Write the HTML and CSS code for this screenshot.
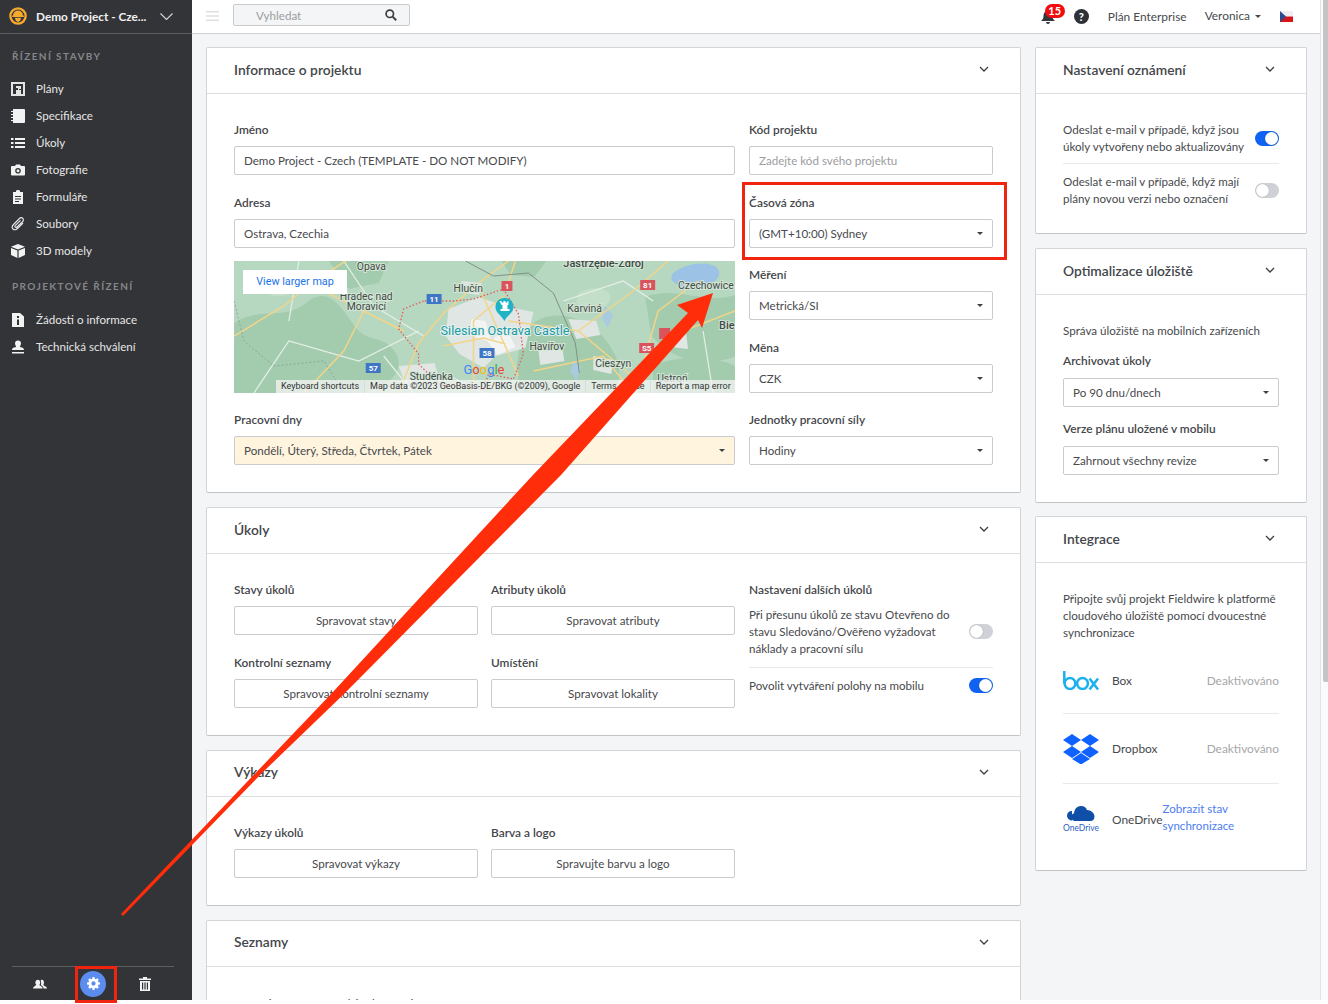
FILE: index.html
```html
<!DOCTYPE html>
<html lang="cs">
<head>
    <meta charset="UTF-8">
    <meta name="viewport" content="width=device-width, initial-scale=1.0">
    <title>Nastavení projektu</title>
    <link rel="stylesheet" href="styles.css">
</head>
<body>
<div class="app">
    <aside class="sidebar">
        <div class="project">
            <svg class="project-logo" viewBox="0 0 20 20"><circle cx="10" cy="10" r="8.500" fill="none" stroke="#f5a92e" stroke-width="2.600"/><path d="M4.500 9.500a5.500 5.500 0 0 1 11 0h1v1.500h-13V9.500z" fill="#f5a92e"/><path d="M6.500 12h7l-1 3-2.500 2-2.500-2z" fill="#f5a92e"/></svg>
            <span class="project-name">Demo Project - Cze...</span>
            <svg class="project-caret" viewBox="0 0 13 7"><path d="M.5.500l6 6 6-6" fill="none" stroke="#d8d9da" stroke-width="1.100"/></svg>
        </div>
        <div class="nav-title first">ŘÍZENÍ STAVBY</div>
        <a class="nav-item"><svg viewBox="0 0 14 14"><path d="M0 0h14v14H0zM2 2v10h3V8h2V6H5V4h5v3H8v1h2v4h2V2z" fill="#e4e4e4" fill-rule="evenodd"/></svg>Plány</a>
        <a class="nav-item"><svg viewBox="0 0 14 14"><path d="M2 0h11a1 1 0 0 1 1 1v12a1 1 0 0 1-1 1H2z" fill="#f2f2f2"/><path d="M0 2.500h3M0 5.500h3M0 8.500h3M0 11.500h3" stroke="#f2f2f2"/></svg>Specifikace</a>
        <a class="nav-item"><svg viewBox="0 0 14 14"><path d="M0 2h2.500v2H0zM0 6h2.500v2H0zM0 10h2.500v2H0zM4 2h10v2H4zM4 6h10v2H4zM4 10h10v2H4z" fill="#f2f2f2"/></svg>Úkoly</a>
        <a class="nav-item"><svg viewBox="0 0 14 14"><path d="M1 3h3l1-1.500h4L10 3h3a1 1 0 0 1 1 1v7.500a1 1 0 0 1-1 1H1a1 1 0 0 1-1-1V4a1 1 0 0 1 1-1zm6 2a2.800 2.800 0 1 0 0 5.600A2.800 2.800 0 0 0 7 5zm0 1.300a1.500 1.500 0 1 1 0 3 1.500 1.500 0 0 1 0-3z" fill="#f2f2f2" fill-rule="evenodd"/></svg>Fotografie</a>
        <a class="nav-item"><svg viewBox="0 0 14 14"><path d="M2 2h3V1a2 1 0 0 1 4 0v1h3v12H2zM4 6v1h6V6zM4 8.500v1h6v-1zM4 11v1h4v-1z" fill="#f2f2f2" fill-rule="evenodd"/></svg>Formuláře</a>
        <a class="nav-item"><svg viewBox="0 0 14 14"><path d="M12 6l-5.500 5.500c-1.500 1.500-3.500 1.500-4.500.5s-1-3 .5-4.500L8.500 1.500c1-1 2.500-1 3.300-.2s.8 2.300-.2 3.300L6 10c-.6.600-1.400.6-1.800.2s-.4-1.200.2-1.800L9.500 3.300" fill="none" stroke="#eaeaea" stroke-width="1.100"/></svg>Soubory</a>
        <a class="nav-item"><svg viewBox="0 0 14 14"><path d="M7 0l7 2.800L7 5.600 0 2.800zM0 4l6.400 2.600V14L0 11zM14 4L7.600 6.600V14l6.400-3z" fill="#f2f2f2"/></svg>3D modely</a>
        <div class="nav-title">PROJEKTOVÉ ŘÍZENÍ</div>
        <a class="nav-item"><svg viewBox="0 0 14 14"><path d="M1 0h8l4 3.500V14H1zM6 3v2h2V3zM6 6.500V12h2V6.500z" fill="#f2f2f2" fill-rule="evenodd"/></svg>Žádosti o informace</a>
        <a class="nav-item"><svg viewBox="0 0 14 14"><path d="M5 7c0-1.500-1-2-1-3.500a3 3 0 0 1 6 0C10 5 9 5.500 9 7c1.500.5 4 .6 4 3H1c0-2.400 2.500-2.500 4-3zM1 12h12v1.500H1z" fill="#f2f2f2"/></svg>Technická schválení</a>
        <div class="sidebar-foot">
            <svg class="foot-icon" viewBox="0 0 16 14"><path d="M0 12c0-2 2.500-2.500 3.500-3.500.3-.5 0-1-.5-1.800C2.500 6 2.500 2 5.500 2S8.500 6 8 6.700c-.5.800-.8 1.300-.5 1.800C8.500 9.500 11 10 11 12zM12 12c0-2-1.500-3-3-4 .5-1 .3-1.500.3-2.300C9 4 9 3 8.800 2.300 11.800 1.300 13 4 12.500 6c-.3 1-.8 1.700-.5 2.500.8 1 4 1.500 4 3.500z" fill="#f2f2f2"/></svg>
            <span class="foot-active"><svg viewBox="0 0 14 14"><path d="M6 0h2l.3 1.800 1.200.5L11 1.300l1.700 1.700-1 1.500.5 1.200L14 6v2l-1.800.3-.5 1.200 1 1.500-1.700 1.700-1.500-1-1.200.5L8 14H6l-.3-1.800-1.200-.5-1.500 1L1.300 11l1-1.500-.5-1.200L0 8V6l1.800-.3.500-1.200-1-1.500L3 1.300l1.500 1 1.200-.5zM7 4.700a2.300 2.300 0 1 0 0 4.600 2.300 2.300 0 0 0 0-4.600z" fill="#fff" fill-rule="evenodd"/></svg></span>
            <svg class="foot-icon" viewBox="0 0 12 14"><path d="M0 1.500h4V0h4v1.500h4V3H0zM1 4h10v10H1zM3 5.500v7h1.200v-7zM5.400 5.500v7h1.200v-7zM7.800 5.500v7H9v-7z" fill="#f2f2f2" fill-rule="evenodd"/></svg>
        </div>
    </aside>

    <div class="content">
        <header class="topbar">
            <svg class="burger" viewBox="0 0 14 10"><path d="M0 .5h14M0 5h14M0 9.500h14" stroke="#c9ccd0"/></svg>
            <div class="search">
                <span>Vyhledat</span>
                <svg viewBox="0 0 12 12"><circle cx="4.800" cy="4.800" r="3.700" fill="none" stroke="#3c3f44" stroke-width="1.700"/><path d="M7.600 7.600l3.600 3.600" stroke="#3c3f44" stroke-width="2"/></svg>
            </div>
            <div class="top-right">
                <span class="bell">
                    <svg viewBox="0 0 14 16"><path d="M7 1a1 1 0 0 1 1 1c2.500.5 3.500 2.500 3.500 5 0 3 1 3.500 2.500 5H0c1.500-1.500 2.500-2 2.500-5 0-2.500 1-4.500 3.500-5a1 1 0 0 1 1-1zM5 13h4a2 2 0 0 1-4 0z" fill="#33363b"/></svg>
                    <span class="badge">15</span>
                </span>
                <span class="help">?</span>
                <span class="plan">Plán Enterprise</span>
                <span class="user">Veronica<i class="mini-caret"></i></span>
                <svg class="flag" viewBox="0 0 13 11"><path d="M0 0h13v5.500H0z" fill="#eeeef2"/><path d="M0 5.500h13V11H0z" fill="#d7141a"/><path d="M0 0l6 5.500L0 11z" fill="#2a4a8f"/></svg>
            </div>
        </header>

        <main class="main">
            <div class="col-left">
                <section class="card">
                    <div class="card-head">Informace o projektu<svg class="chev" viewBox="0 0 10 6"><path d="M1 1l4 4 4-4" fill="none" stroke="#3c3f44" stroke-width="1.300"/></svg></div>
                    <div class="info-grid">
                        <div class="info-main">
                            <div class="field"><label>Jméno</label><div class="input">Demo Project - Czech (TEMPLATE - DO NOT MODIFY)</div></div>
                            <div class="field"><label>Adresa</label><div class="input">Ostrava, Czechia</div></div>
                            <div class="map">
                                <svg viewBox="0 0 502 132" preserveAspectRatio="none">
                                    <rect width="502" height="132" fill="#b7d8c0"/>
                                    <g fill="#a3ccae">
                                        <path d="M0 62C25 45 50 60 72 42s34 2 48 22 30 8 42 28-12 40-50 40H0z"/>
                                        <path d="M95 0h60l-10 22-30 6z"/>
                                        <path d="M300 62c22-16 55-4 70 14s22 38 10 56h-90c-12-22-6-52 10-70z"/>
                                        <path d="M412 36c30-12 60 8 90-2v62c-38 12-66 0-84-22z"/>
                                        <path d="M420 105c20-10 60-12 82 0v27h-82z"/>
                                        <path d="M268 0h45l-12 16-24-2z"/>
                                    </g>
                                    <g fill="#c3dfc9">
                                        <path d="M30 20c15-8 30-6 30 5s-20 14-30 5z"/>
                                        <path d="M345 32c14-8 34-6 32 6s-26 14-34 4z"/>
                                    </g>
                                    <path d="M440 12c15-12 40-12 45-4s-5 18-25 18-25-8-20-14z" fill="#9cc3e6"/>
                                    <path d="M372 45l8 10-6 12-5-10zM340 100l8 6-5 14-6-10z" fill="#a9cbe0"/>
                                    <g fill="#dfe6e3">
                                        <path d="M215 48l30-12 30 10 25 5-8 36-30 8-12 12-24-14-14-18z"/>
                                        <path d="M335 58l28 2 4 14-24 4zM305 90l24-2 2 12-24 4zM165 105l36-3 4 14-34 6zM360 95l20 4-2 14-18-4zM435 70l18 2 2 16-18-2zM228 20l20 2-2 12-16-2z"/>
                                    </g>
                                    <path d="M238 58l14 2 6 20 14-14 10 20-18 8-10-14-18-6z" fill="#f2f5f4"/>
                                    <path d="M20 132L55 80l70 20 60-30M110 0l30 45 50 30M330 40l60-20 30 20M470 70l10 62M65 0l-10 60M150 95l30 37M250 132l-40-20" fill="none" stroke="#e5efe8" stroke-width="1.200"/>
                                    <path d="M0 75L50 45l30-25 32-20M70 20l60 30 40 20M130 50l-20 40-40 42M165 132l20-50 25-30 35-30 30-22M245 25l40 90M240 130V60l30-25M275 60l70 10 60 50M345 70l55-40 35-30M405 120l20-70 40-30M450 70l52-20M300 110l70-15 30 37M282 0l-10 30M210 85l40-8 22 6" fill="none" stroke="#f3d488" stroke-width="1.500"/>
                                    <path d="M190 40l-20 8-5 20 20 25 0 10 20 20 45 5 5-15 25 5 10-25-5-40-15-25-30 10-20 2z" fill="none" stroke="#e8585a" stroke-width="1.300" stroke-dasharray="1.500 2"/>
                                    <path d="M232 0l28 15 35-3 25 20 22 50 4 30" fill="none" stroke="#838f89" stroke-width="1"/>
                                    <path d="M0 40l10 40 30 25 50-5 20 32" fill="none" stroke="#8fa59a" stroke-dasharray="2 2"/>
                                    <g class="map-label">
                                        <text x="123" y="9">Opava</text>
                                        <text x="220" y="31">Hlučín</text>
                                        <text x="106" y="39">Hradec nad</text>
                                        <text x="113" y="49">Moravicí</text>
                                        <text x="334" y="51">Karviná</text>
                                        <text x="296" y="89">Havířov</text>
                                        <text x="362" y="106">Cieszyn</text>
                                        <text x="176" y="119">Studénka</text>
                                        <text x="445" y="28">Czechowice</text>
                                        <text x="486" y="68" class="map-bold">Bie</text>
                                        <text x="330" y="6" class="map-bold">Jastrzębie-Zdrój</text>
                                        <text x="424" y="121">Ustroń</text>
                                    </g>
                                    <text x="207" y="74" class="map-poi">Silesian Ostrava Castle</text>
                                    <g class="map-shield"><rect x="193" y="33" width="15" height="10" fill="#3e76c5"/><text x="200.500" y="41">11</text></g>
                                    <g class="map-shield"><rect x="268" y="20" width="11" height="10" fill="#d9545c"/><text x="273.500" y="28">1</text></g>
                                    <g class="map-shield"><rect x="246" y="87" width="15" height="10" fill="#3e76c5"/><text x="253.500" y="95">58</text></g>
                                    <g class="map-shield"><rect x="132" y="102" width="15" height="10" fill="#3e76c5"/><text x="139.500" y="110">57</text></g>
                                    <g class="map-shield"><rect x="407" y="19" width="15" height="10" fill="#d9545c"/><text x="414.500" y="27">81</text></g>
                                    <g class="map-shield"><rect x="406" y="82" width="15" height="10" fill="#d9545c"/><text x="413.500" y="90">S5</text></g>
                                    <rect x="426" y="67" width="11" height="11" fill="#d9545c"/>
                                    <path d="M271 37c-6 0-9 4-9 9 0 6 6 8 9 14 3-6 9-8 9-14 0-5-3-9-9-9z" fill="#1fb3c6"/>
                                    <path d="M266 40h2v1.500h2V40h2v1.500h2V40h1v4h-1v4h2v2h-9v-2h2v-4h-1z" fill="#fff"/>
                                    <text x="230" y="113" class="google"><tspan fill="#4285f4">G</tspan><tspan fill="#ea4335">o</tspan><tspan fill="#fbbc05">o</tspan><tspan fill="#4285f4">g</tspan><tspan fill="#34a853">l</tspan><tspan fill="#ea4335">e</tspan></text>
                                </svg>
                                <a class="map-link">View larger map</a>
                                <div class="map-attrib"><span>Keyboard shortcuts</span><span>Map data ©2023 GeoBasis-DE/BKG (©2009), Google</span><span>Terms of Use</span><span>Report a map error</span></div>
                            </div>
                            <div class="field last"><label>Pracovní dny</label><div class="input select warm">Pondělí, Úterý, Středa, Čtvrtek, Pátek</div></div>
                        </div>
                        <div class="info-side">
                            <div class="field"><label>Kód projektu</label><div class="input muted">Zadejte kód svého projektu</div></div>
                            <div class="field"><label>Časová zóna</label><div class="input select">(GMT+10:00) Sydney</div></div>
                            <div class="field"><label>Měření</label><div class="input select">Metrická/SI</div></div>
                            <div class="field"><label>Měna</label><div class="input select">CZK</div></div>
                            <div class="field last"><label>Jednotky pracovní síly</label><div class="input select">Hodiny</div></div>
                        </div>
                    </div>
                </section>

                <section class="card">
                    <div class="card-head">Úkoly<svg class="chev" viewBox="0 0 10 6"><path d="M1 1l4 4 4-4" fill="none" stroke="#3c3f44" stroke-width="1.300"/></svg></div>
                    <div class="three-grid">
                        <div>
                            <div class="field"><label>Stavy úkolů</label><div class="btn">Spravovat stavy</div></div>
                            <div class="field last"><label>Kontrolní seznamy</label><div class="btn">Spravovat kontrolní seznamy</div></div>
                        </div>
                        <div>
                            <div class="field"><label>Atributy úkolů</label><div class="btn">Spravovat atributy</div></div>
                            <div class="field last"><label>Umístění</label><div class="btn">Spravovat lokality</div></div>
                        </div>
                        <div class="extra">
                            <label>Nastavení dalších úkolů</label>
                            <div class="toggle-row first"><p>Při přesunu úkolů ze stavu Otevřeno do stavu Sledováno/Ověřeno vyžadovat náklady a pracovní sílu</p><span class="toggle"></span></div>
                            <div class="toggle-row"><p>Povolit vytváření polohy na mobilu</p><span class="toggle on"></span></div>
                        </div>
                    </div>
                </section>

                <section class="card">
                    <div class="card-head">Výkazy<svg class="chev" viewBox="0 0 10 6"><path d="M1 1l4 4 4-4" fill="none" stroke="#3c3f44" stroke-width="1.300"/></svg></div>
                    <div class="three-grid">
                        <div class="field last"><label>Výkazy úkolů</label><div class="btn">Spravovat výkazy</div></div>
                        <div class="field last"><label>Barva a logo</label><div class="btn">Spravujte barvu a logo</div></div>
                    </div>
                </section>

                <section class="card">
                    <div class="card-head">Seznamy<svg class="chev" viewBox="0 0 10 6"><path d="M1 1l4 4 4-4" fill="none" stroke="#3c3f44" stroke-width="1.300"/></svg></div>
                    <div class="lists-body"><p>Spravujte seznamy štítků a kategorií</p></div>
                </section>
            </div>

            <div class="col-right">
                <section class="card">
                    <div class="card-head">Nastavení oznámení<svg class="chev" viewBox="0 0 10 6"><path d="M1 1l4 4 4-4" fill="none" stroke="#3c3f44" stroke-width="1.300"/></svg></div>
                    <div class="side-body notify">
                        <div class="toggle-row first"><p>Odeslat e-mail v případě, když jsou úkoly vytvořeny nebo aktualizovány</p><span class="toggle on"></span></div>
                        <div class="toggle-row"><p>Odeslat e-mail v případě, když mají plány novou verzi nebo označení</p><span class="toggle"></span></div>
                    </div>
                </section>
                <section class="card card-storage">
                    <div class="card-head">Optimalizace úložiště<svg class="chev" viewBox="0 0 10 6"><path d="M1 1l4 4 4-4" fill="none" stroke="#3c3f44" stroke-width="1.300"/></svg></div>
                    <div class="side-body storage">
                        <p class="storage-note">Správa úložiště na mobilních zařízeních</p>
                        <div class="field"><label>Archivovat úkoly</label><div class="input select">Po 90 dnu/dnech</div></div>
                        <div class="field last"><label>Verze plánu uložené v mobilu</label><div class="input select">Zahrnout všechny revize</div></div>
                    </div>
                </section>
                <section class="card">
                    <div class="card-head">Integrace<svg class="chev" viewBox="0 0 10 6"><path d="M1 1l4 4 4-4" fill="none" stroke="#3c3f44" stroke-width="1.300"/></svg></div>
                    <div class="side-body integr">
                        <p class="integr-note">Připojte svůj projekt Fieldwire k platformě cloudového úložiště pomocí dvoucestné synchronizace</p>
                        <div class="integr-row">
                            <svg class="integr-logo" viewBox="0 0 36 19"><g fill="none" stroke="#1ab1ee" stroke-width="2.500"><path d="M1.300 0v12.500"/><circle cx="7" cy="12.500" r="5.400"/><circle cx="19.500" cy="12.500" r="5.400"/><path d="M26.500 7.500l8.500 11M35 7.500l-8.500 11"/></g></svg>
                            <span class="integr-name">Box</span><span class="integr-state">Deaktivováno</span>
                        </div>
                        <div class="integr-row">
                            <svg class="integr-logo" viewBox="0 0 36 30"><path d="M9 0l9 6-9 6-9-6zM27 0l9 6-9 6-9-6zM9 12l9 6-9 6-9-6zM27 12l9 6-9 6-9-6zM18 19l9 6-9 5.500L9 25z" fill="#0f62fe"/></svg>
                            <span class="integr-name">Dropbox</span><span class="integr-state">Deaktivováno</span>
                        </div>
                        <div class="integr-row">
                            <span class="onedrive"><svg viewBox="0 0 28 17"><path d="M8 16a4 4 0 0 1-1-7.800C7.500 4 10 1 14 1c3 0 5 1.500 6 4 4 0 7.500 3 7.500 6.500 0 2.500-1.500 4.500-4 4.500z" fill="#0f4fa8"/><path d="M5 15.500C2 15.500 0 13 0 10.500 0 8 2 6 5 6z" fill="#0f4fa8"/></svg><span>OneDrive</span></span>
                            <span class="integr-name">OneDrive</span><a class="integr-link">Zobrazit stav synchronizace</a>
                        </div>
                    </div>
                </section>
            </div>
        </main>
    </div>
    <div class="scrollbar"><span></span></div>

    <!-- annotations drawn over the screenshot -->
    <div class="mark mark-zone"></div>
    <div class="mark mark-gear"></div>
    <svg class="arrow" viewBox="0 0 1328 1004"><path d="M121 914L332 693L533 475L688 313L677 305L713 293L702 328L698 320L561 475L345 693L262 773L123 916z" fill="#ff2d0a"/></svg>
</div>
</body>
</html>
```

FILE: styles.css
```css
* {
    box-sizing: border-box;
}
html, body {
    margin: 0;
    background: #fff;
}
body {
    font-family: Lato, "Open Sans", sans-serif;
    font-size: 11.6px;
    color: #47494d;
}
p {
    margin: 0;
}
.app {
    position: relative;
    display: flex;
    align-items: flex-start;
    height: 1004px;
    overflow: hidden;
}

/* sidebar */
.sidebar {
    width: 192px;
    height: 1000px;
    flex: none;
    background: #323437;
    color: #e8e8e8;
    display: flex;
    flex-direction: column;
}
.project {
    height: 34px;
    flex: none;
    display: flex;
    align-items: center;
    padding: 0 0 1px 9px;
    border-bottom: 1px solid #5b5d60;
    color: #f1f1f1;
    font-weight: 700;
    font-size: 11.8px;
}
.project-logo {
    width: 18px;
    height: 18px;
    margin-right: 9px;
}
.project-name {
    width: 120px;
    white-space: nowrap;
}
.project-caret {
    width: 13px;
    height: 7px;
    margin-left: 4px;
}
.nav-title {
    margin: 15px 0 13px 12px;
    height: 14px;
    line-height: 14px;
    font-size: 10px;
    font-weight: 700;
    letter-spacing: 1.4px;
    color: #85878a;
}
.nav-title.first {
    margin-bottom: 12px;
}
.nav-item {
    height: 27px;
    flex: none;
    display: flex;
    align-items: center;
    padding-left: 11px;
    color: #e6e6e6;
}
.nav-item svg {
    width: 14px;
    height: 14px;
    margin-right: 11px;
    flex: none;
}
.sidebar-foot {
    margin: auto 18px 0 12px;
    height: 34px;
    border-top: 1px solid #5b5d60;
    display: flex;
    align-items: center;
    padding-left: 21px;
}
.foot-icon {
    width: 14px;
    height: 14px;
}
.foot-active {
    width: 26px;
    height: 26px;
    border-radius: 50%;
    background: #5b8def;
    display: flex;
    align-items: center;
    justify-content: center;
    margin: 0 32px 0 33px;
}
.foot-active svg {
    width: 13px;
    height: 13px;
}

/* top bar */
.content {
    flex: 1;
    min-width: 0;
    height: 1000px;
    overflow: hidden;
    background: #f4f5f7;
}
.topbar {
    height: 34px;
    background: #fff;
    border-bottom: 1px solid #cfd1d4;
    display: flex;
    align-items: center;
    padding-left: 14px;
}
.burger {
    width: 13px;
    height: 10px;
    margin: 0 14px 2px 0;
}
.search {
    width: 177px;
    height: 22px;
    margin-bottom: 3px;
    background: #f4f5f7;
    border: 1px solid #c9cbce;
    border-radius: 2px;
    display: flex;
    align-items: center;
    justify-content: space-between;
    padding: 0 12px 0 22px;
    color: #9a9c9f;
}
.search svg {
    width: 12px;
    height: 12px;
}
.top-right {
    margin-left: auto;
    padding-right: 35px;
    display: flex;
    align-items: center;
    font-size: 11.900px;
}
.bell {
    position: relative;
    width: 14px;
    height: 16px;
    margin-right: 19px;
}
.bell svg {
    width: 14px;
    height: 16px;
    display: block;
}
.badge {
    position: absolute;
    top: -5px;
    left: 4px;
    height: 14px;
    padding: 0 3.500px;
    background: #f00d0d;
    color: #fff;
    border-radius: 8px;
    font-size: 11px;
    font-weight: 700;
    line-height: 14px;
}
.help {
    width: 15px;
    height: 15px;
    border-radius: 50%;
    background: #2e3136;
    color: #fff;
    font-size: 11px;
    font-weight: 900;
    text-align: center;
    line-height: 15px;
    margin-right: 19px;
}
.plan {
    margin-right: 18px;
}
.user {
    margin: 0 19px 2px 0;
}
.mini-caret {
    display: inline-block;
    margin-left: 5px;
    vertical-align: 2px;
    border: 3px solid transparent;
    border-top-color: #47494d;
    border-bottom: 0;
}
.flag {
    width: 13px;
    height: 11px;
}

/* main area */
.main {
    height: 966px;
    display: flex;
    align-items: flex-start;
    gap: 14px;
    padding: 13px 0 0 14px;
}
.col-left {
    width: 815px;
    flex: none;
}
.col-right {
    width: 272px;
    flex: none;
}
.card {
    background: #fff;
    border: 1px solid #d2d4d7;
    border-bottom: 1px solid #c2c4c7;
    border-radius: 2px;
    margin-bottom: 14px;
}
.card-storage {
    margin-bottom: 13px;
}
.card-head {
    height: 46px;
    border-bottom: 1px solid #dcdee0;
    padding: 0 31px 3px 27px;
    display: flex;
    align-items: center;
    justify-content: space-between;
    font-size: 13.800px;
    font-weight: 600;
    color: #44464a;
}
.chev {
    width: 10px;
    height: 6px;
}
label {
    display: block;
    height: 16px;
    line-height: 15px;
    font-weight: 600;
    font-size: 11.900px;
    color: #44464a;
}
.field {
    height: 72.500px;
    display: flex;
    flex-direction: column;
    gap: 8px;
}
.field.last {
    height: 53px;
}
.input {
    height: 29px;
    flex: none;
    border: 1px solid #c9cbce;
    border-radius: 2px;
    padding: 0 9px;
    line-height: 28px;
    white-space: nowrap;
    background: #fff;
    position: relative;
}
.input.muted {
    color: #9a9c9f;
}
.input.warm {
    background: #fff4dd;
}
.select::after {
    content: "";
    position: absolute;
    right: 9px;
    top: 12px;
    border: 3px solid transparent;
    border-top-color: #3c3f44;
    border-bottom: 0;
}
.btn {
    height: 29px;
    flex: none;
    border: 1px solid #c9cbce;
    border-radius: 2px;
    text-align: center;
    line-height: 28px;
    background: #fff;
}
.info-grid {
    display: grid;
    grid-template-columns: 501px 244px;
    gap: 14px;
    padding: 28px 27px 27px;
}
.map {
    position: relative;
    height: 132px;
    margin: -6px 0 19px;
    overflow: hidden;
}
.map > svg {
    display: block;
    width: 100%;
    height: 100%;
}
.map-label text {
    font-family: Roboto, sans-serif;
    font-size: 10.400px;
    fill: #3f4a44;
    stroke: #d5e6d8;
    stroke-width: 2px;
    paint-order: stroke;
}
.map-label text.map-bold {
    font-weight: 500;
    font-size: 11px;
}
.map-poi {
    font-family: Roboto, sans-serif;
    font-size: 12.700px;
    fill: #1a9aa8;
    stroke: #e6f0ea;
    stroke-width: 2px;
    paint-order: stroke;
}
.map-shield text {
    font-family: Roboto, sans-serif;
    font-size: 8px;
    font-weight: 700;
    fill: #fff;
    text-anchor: middle;
}
.google {
    font-family: Roboto, sans-serif;
    font-size: 13px;
}
.map-link {
    position: absolute;
    top: 9px;
    left: 9px;
    width: 104px;
    height: 24px;
    background: #fff;
    color: #1a73e8;
    font-family: Roboto, sans-serif;
    font-size: 10.800px;
    line-height: 24px;
    text-align: center;
}
.map-attrib {
    position: absolute;
    right: 0;
    bottom: 0;
    width: 459px;
    height: 13px;
    background: rgba(245, 245, 245, 0.75);
    display: flex;
    justify-content: space-between;
    font-family: Roboto, sans-serif;
    font-size: 9px;
    line-height: 13px;
    color: #333;
    white-space: nowrap;
}
.map-attrib span {
    padding: 0 5px;
    border-right: 1px solid #dcdcdc;
}
.three-grid {
    display: grid;
    grid-template-columns: repeat(3, 244px);
    column-gap: 13px;
    padding: 28px 27px 27px;
}
.three-grid > .extra {
    margin: 0 -1px 0 1px;
}
.extra label {
    margin-bottom: 8px;
}
.extra .toggle-row.first {
    padding-bottom: 10px;
    margin-bottom: 9px;
}
.lists-body {
    padding: 28px 27px;
    line-height: 17px;
}
.toggle-row {
    display: flex;
    align-items: center;
    justify-content: space-between;
    line-height: 17px;
}
.toggle-row p {
    width: 215px;
}
.toggle-row.first {
    padding-bottom: 8px;
    margin-bottom: 9px;
    border-bottom: 1px solid #e8e9ea;
}
.toggle {
    width: 24px;
    height: 15px;
    flex: none;
    position: relative;
    border-radius: 8px;
    background: #cfd1d6;
}
.toggle::after {
    content: "";
    position: absolute;
    left: 1px;
    top: 1px;
    width: 13px;
    height: 13px;
    border-radius: 50%;
    background: #fff;
    box-shadow: 0 0 1px rgba(0, 0, 0, 0.4);
}
.toggle.on {
    background: #0f62f2;
}
.toggle.on::after {
    left: 10px;
}
.side-body {
    padding: 0 27px;
}
.notify {
    padding-top: 27px;
    padding-bottom: 26px;
}
.notify .toggle-row p {
    width: 190px;
}
.storage {
    padding-top: 27px;
    padding-bottom: 27px;
}
.storage-note {
    line-height: 17px;
    margin-bottom: 14px;
}
.storage .field {
    height: 68px;
    gap: 9px;
}
.storage .field.last {
    height: 54px;
}
.integr {
    padding-top: 27px;
    padding-bottom: 16px;
}
.integr-note {
    line-height: 17px;
    margin-bottom: 3px;
}
.integr-row {
    height: 70px;
    display: flex;
    align-items: center;
    border-bottom: 1px solid #e8e9ea;
}
.integr-note + .integr-row {
    padding-top: 3px;
}
.integr-row:last-child {
    border-bottom: 0;
}
.integr-logo {
    width: 36px;
    margin-right: 13px;
    flex: none;
}
.integr-name {
    font-size: 11.900px;
}
.onedrive {
    width: 36px;
    margin-right: 13px;
    flex: none;
    font-size: 8.500px;
    color: #2a5fc1;
    text-align: center;
    white-space: nowrap;
}
.onedrive svg {
    display: block;
    width: 28px;
    height: 17px;
    margin: 0 auto 1px;
}
.integr-state {
    margin-left: auto;
    color: #a5a7aa;
    font-size: 11.900px;
}
.integr-link {
    width: 90px;
    margin-bottom: 4px;
    color: #4d7df2;
    line-height: 17px;
}

/* scrollbar */
.scrollbar {
    position: absolute;
    top: 0;
    right: 0;
    width: 8px;
    height: 1000px;
    background: #fbfbfb;
    border-left: 1px solid #e3e3e3;
}
.scrollbar span {
    display: block;
    width: 5px;
    height: 682px;
    background: #c4c4c4;
    margin-left: 2px;
    border-radius: 0 0 0 2px;
}

/* annotations */
.mark {
    position: absolute;
    border: 3px solid #f0240f;
}
.mark-zone {
    left: 742px;
    top: 182px;
    width: 265px;
    height: 78px;
}
.mark-gear {
    left: 75px;
    top: 966px;
    width: 42px;
    height: 37px;
}
.arrow {
    position: absolute;
    left: 0;
    top: 0;
    width: 1328px;
    height: 1004px;
    pointer-events: none;
}
```
